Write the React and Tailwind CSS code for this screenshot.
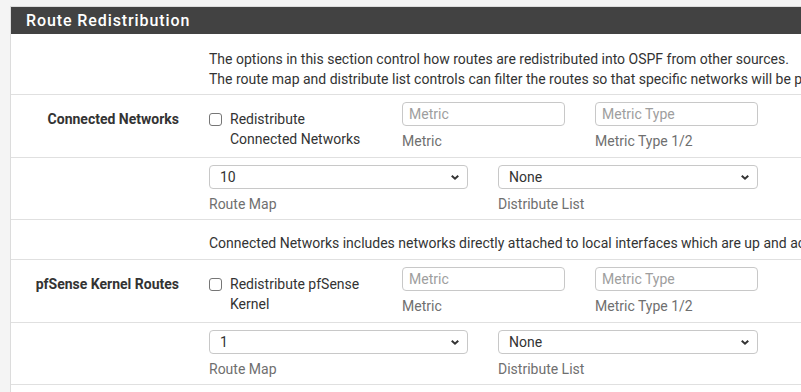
import React from 'react'

const Chevron = () => (
  <svg width="10" height="7" viewBox="0 0 10 7" className="absolute right-[8px] top-[9px]">
    <polyline points="1.75,1.75 5,4.75 8.25,1.75" fill="none" stroke="#333" strokeWidth="2" />
  </svg>
)

const Select = ({ value, width }) => (
  <div className="relative" style={{ width }}>
    <div className="h-[24px] border border-[#c8c8c8] rounded-[4px] pl-[10px] leading-[22px] text-[#333] bg-white">
      {value}
    </div>
    <Chevron />
  </div>
)

const TextInput = ({ placeholder }) => (
  <input
    placeholder={placeholder}
    className="w-[163px] h-[24px] border border-[#c8c8c8] rounded-[4px] px-[6px] text-[#333] placeholder:text-[#9e9e9e] outline-none"
  />
)

const Help = ({ children }) => (
  <div className="mt-[5px] leading-[20px] text-[#6f6f6f]">{children}</div>
)

const CheckRow = ({ label, text1, text2 }) => (
  <div className="flex border-b border-[#e0e0e0] pt-[7px] pb-[6px]">
    <div className="w-[183px] shrink-0 pr-[15px] pt-[7px] text-right font-bold leading-[20px] text-[#333]">{label}</div>
    <div className="w-[193px] shrink-0 px-[15px] pt-[7px] flex">
      <span className="w-[13px] h-[13px] mt-[4px] border border-[#767676] rounded-[3px] shrink-0 bg-white" />
      <div className="ml-[8px] leading-[20px] text-[#333]">
        <div>{text1}</div>
        <div>{text2}</div>
      </div>
    </div>
    <div className="w-[193px] shrink-0 px-[15px]">
      <TextInput placeholder="Metric" />
      <Help>Metric</Help>
    </div>
    <div className="w-[193px] shrink-0 px-[15px]">
      <TextInput placeholder="Metric Type" />
      <Help>Metric Type 1/2</Help>
    </div>
  </div>
)

const SelectRow = ({ map }) => (
  <div className="flex border-b border-[#e0e0e0] pt-[7px] pb-[5px]">
    <div className="w-[183px] shrink-0" />
    <div className="w-[289px] shrink-0 px-[15px]">
      <Select value={map} width={259} />
      <Help>Route Map</Help>
    </div>
    <div className="w-[290px] shrink-0 px-[15px]">
      <Select value="None" width={260} />
      <Help>Distribute List</Help>
    </div>
  </div>
)

const App = () => {
  return (
    <div className="w-[801px] h-[392px] overflow-hidden bg-[#f4f4f4] pt-[6px] pl-[10px] text-[14px]" style={{ fontFamily: 'Roboto, sans-serif' }}>
      <div className="w-[1200px] h-[420px] bg-white border-l border-t border-[#dcdcdc]">
        <div className="h-[27px] bg-[#424242] text-white pl-[15px] text-[16px] font-medium tracking-[0.9px] leading-[27px]">
          Route Redistribution
        </div>

        {/* intro */}
        <div className="flex border-b border-[#e0e0e0] pt-[15px] pb-[5px]">
          <div className="w-[183px] shrink-0" />
          <div className="px-[15px] leading-[20px] text-[#333] whitespace-nowrap">
            <div>The options in this section control how routes are redistributed into OSPF from other sources.</div>
            <div>The route map and distribute list controls can filter the routes so that specific networks will be prevented from being redistributed.</div>
          </div>
        </div>

        <CheckRow label="Connected Networks" text1="Redistribute" text2="Connected Networks" />
        <SelectRow map="10" />

        <div className="flex border-b border-[#e0e0e0] pt-[13px] pb-[6px]">
          <div className="w-[183px] shrink-0" />
          <div className="px-[15px] leading-[20px] text-[#333] whitespace-nowrap">
            Connected Networks includes networks directly attached to local interfaces which are up and active.
          </div>
        </div>

        <CheckRow label="pfSense Kernel Routes" text1="Redistribute pfSense" text2="Kernel" />
        <SelectRow map="1" />
      </div>
    </div>
  )
}

export default App
